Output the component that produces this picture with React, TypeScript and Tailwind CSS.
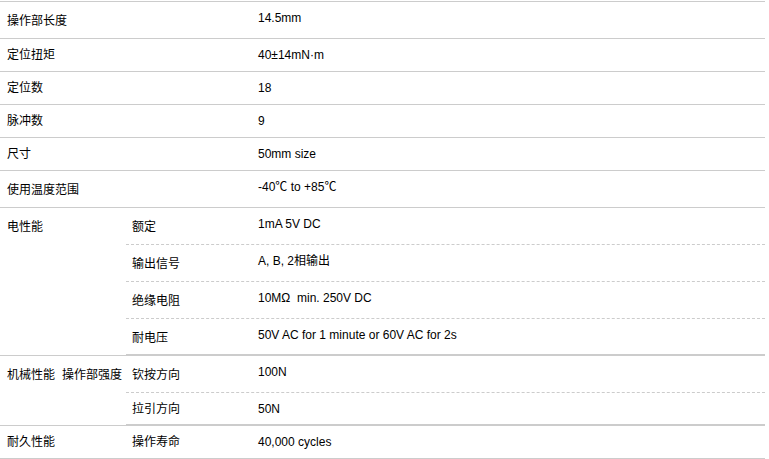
import React from "react";

type Sub = { label: string; value: string; tall: boolean };

const font = "font-['Liberation_Sans','Noto_Sans_CJK_SC',sans-serif]";

const simpleRows: { label: string; value: string; tall: boolean }[] = [
  { label: "操作部长度", value: "14.5mm", tall: true },
  { label: "定位扭矩", value: "40±14mN·m", tall: false },
  { label: "定位数", value: "18", tall: false },
  { label: "脉冲数", value: "9", tall: false },
  { label: "尺寸", value: "50mm size", tall: false },
  { label: "使用温度范围", value: "-40℃ to +85℃", tall: true },
];

const electrical: Sub[] = [
  { label: "额定", value: "1mA 5V DC", tall: true },
  { label: "输出信号", value: "A, B, 2相输出", tall: true },
  { label: "绝缘电阻", value: "10MΩ\u00a0 min. 250V DC", tall: true },
  { label: "耐电压", value: "50V AC for 1 minute or 60V AC for 2s", tall: true },
];

const mechanical: Sub[] = [
  { label: "钦按方向", value: "100N", tall: true },
  { label: "拉引方向", value: "50N", tall: false },
];

// sub row spanning the last two columns; dashed unless it closes the group
const SubRow: React.FC<{ sub: Sub; last: boolean }> = ({ sub, last }) => (
  <div
    className={`grid grid-cols-[126px_1fr] border-b border-[#cccccc] ${
      last ? "border-solid" : "border-dashed"
    }`}
  >
    <div className={`pl-[6px] ${sub.tall ? "pt-[10px]" : "pt-[7px]"}`}>
      {sub.label}
    </div>
    <div className="pl-[6px] pt-[7px]">{sub.value}</div>
  </div>
);

export default function App() {
  return (
    <div className={`min-h-screen bg-white pt-px text-[12px] leading-[18px] text-black ${font}`}>
      <div className="w-[765px] border-t border-[#cccccc]">
        {/* single-value rows */}
        {simpleRows.map((r) => (
          <div
            key={r.label}
            className={`grid grid-cols-[252px_1fr] border-b border-[#cccccc] ${
              r.tall ? "h-[37px]" : "h-[33px]"
            }`}
          >
            <div className={`pl-[7px] ${r.tall ? "pt-[10px]" : "pt-[7px]"}`}>
              {r.label}
            </div>
            <div className="pl-[6px] pt-[7px]">{r.value}</div>
          </div>
        ))}

        {/* electrical */}
        <div className="grid grid-cols-[126px_1fr] border-b border-[#cccccc]">
          <div className="pl-[7px] pt-[10px]">电性能</div>
          <div className="grid grid-rows-[37px_37px_37px_36px]">
            {electrical.map((s, i) => (
              <SubRow key={s.label} sub={s} last={i === electrical.length - 1} />
            ))}
          </div>
        </div>

        {/* mechanical */}
        <div className="grid grid-cols-[55px_71px_1fr] border-b border-[#cccccc]">
          <div className="pl-[7px] pt-[10px]">机械性能</div>
          <div className="pl-[7px] pt-[10px] whitespace-nowrap">操作部强度</div>
          <div className="grid grid-rows-[37px_32px]">
            {mechanical.map((s, i) => (
              <SubRow key={s.label} sub={s} last={i === mechanical.length - 1} />
            ))}
          </div>
        </div>

        {/* durability */}
        <div className="grid h-[33px] grid-cols-[126px_126px_1fr] border-b border-[#cccccc]">
          <div className="pl-[7px] pt-[7px]">耐久性能</div>
          <div className="pl-[6px] pt-[7px]">操作寿命</div>
          <div className="pl-[6px] pt-[7px]">40,000 cycles</div>
        </div>
      </div>
    </div>
  );
}
